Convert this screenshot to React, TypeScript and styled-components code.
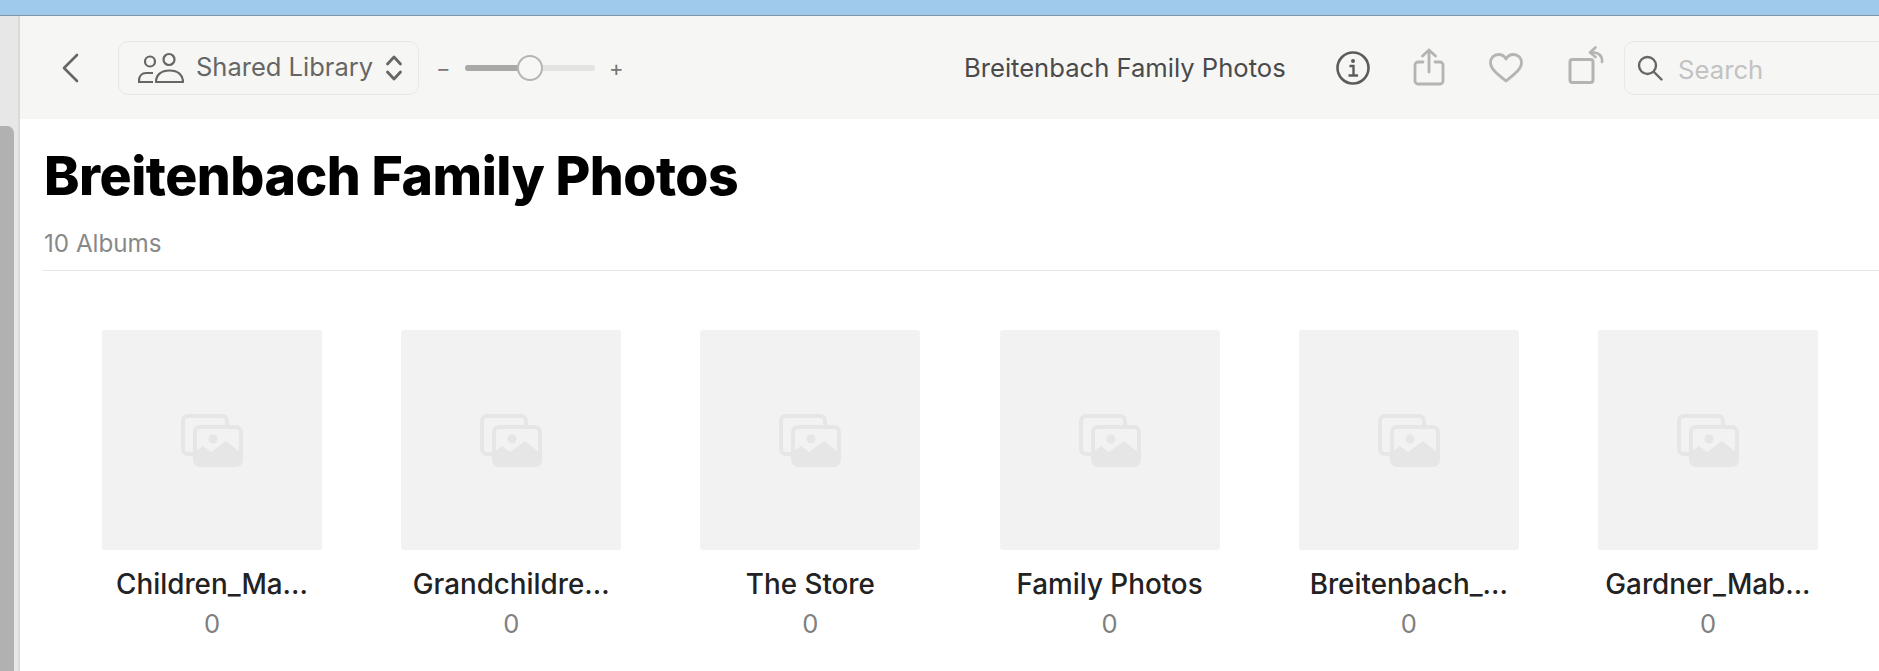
import React, { FC } from 'react';
import styled, { createGlobalStyle } from 'styled-components';

const albums = [
  'Children_Ma...',
  'Grandchildre...',
  'The Store',
  'Family Photos',
  'Breitenbach_...',
  'Gardner_Mab...',
];

const GlobalStyle = createGlobalStyle`
  html, body {
    margin: 0;
    padding: 0;
    background: #fff;
    overflow: hidden;
  }
  body {
    font-family: Inter, "Liberation Sans", sans-serif;
  }
`;

const PlaceholderIcon: FC = () => (
  <svg width="64" height="54" viewBox="0 0 64 54" fill="none">
    <path
      d="M13 41H8a5 5 0 0 1-5-5V8a5 5 0 0 1 5-5h34a5 5 0 0 1 5 5v6"
      stroke="#e6e6e6"
      strokeWidth="4"
    />
    <rect x="15" y="14" width="46" height="38" rx="5" fill="#f2f2f2" stroke="#e6e6e6" strokeWidth="4" />
    <circle cx="33" cy="26" r="4.5" fill="#e6e6e6" />
    <path
      d="M15 47V39l8-6 8 6 15-11 15 12v7a5 5 0 0 1-5 5H20a5 5 0 0 1-5-5z"
      fill="#e6e6e6"
    />
  </svg>
);

export default function App() {
  return (
    <Page>
      <GlobalStyle />
      <TopStrip />
      <Body>
        <SideStrip>
          <ScrollThumb />
        </SideStrip>
        <Main>
          <Toolbar>
            <BackButton aria-label="Back">
              <svg width="18" height="30" viewBox="0 0 18 30" fill="none">
                <path d="M16 2 3 15l13 13" stroke="#666" strokeWidth="2.6" strokeLinecap="round" strokeLinejoin="round" />
              </svg>
            </BackButton>
            <LibraryPicker>
              <svg width="46" height="32" viewBox="0 0 46 32" fill="none" stroke="#666" strokeWidth="2.2">
                <circle cx="12" cy="9.5" r="5" />
                <circle cx="31" cy="7.5" r="5.5" />
                <path d="M15 21H8c-4 0-7 3-7 8v1h14" />
                <path d="M18 30c0-7 5-11.500 13.500-11.500S45 23 45 30z" strokeLinejoin="round" />
              </svg>
              <PickerLabel>Shared Library</PickerLabel>
              <svg width="18" height="28" viewBox="0 0 18 28" fill="none" stroke="#666" strokeWidth="2.800" strokeLinecap="round" strokeLinejoin="round">
                <path d="M2.500 10 9 3l6.500 7" />
                <path d="M2.500 18 9 25l6.500-7" />
              </svg>
            </LibraryPicker>
            <ZoomSign $first>−</ZoomSign>
            <ZoomTrack>
              <ZoomFill />
              <ZoomThumb />
            </ZoomTrack>
            <ZoomSign>+</ZoomSign>
            <ToolbarTitle>Breitenbach Family Photos</ToolbarTitle>
            <ActionIcon aria-label="Info">
              <svg width="36" height="36" viewBox="0 0 36 36" fill="none" stroke="#5c5c5c">
                <circle cx="18" cy="18" r="15.500" strokeWidth="2.600" />
                <circle cx="18" cy="11" r="2" fill="#5c5c5c" stroke="none" />
                <path d="M14.500 16H18.500V25M13.500 25.500H23" strokeWidth="2.400" />
              </svg>
            </ActionIcon>
            <ActionIcon aria-label="Share" $gap={42}>
              <svg width="32" height="40" viewBox="0 0 32 40" fill="none" stroke="#b4b4b4" strokeWidth="2.800" strokeLinecap="round" strokeLinejoin="round">
                <path d="M10 14H5a3 3 0 0 0-3 3v16a3 3 0 0 0 3 3h22a3 3 0 0 0 3-3V17a3 3 0 0 0-3-3h-5" />
                <path d="M16 24V2M9.500 8 16 2l6.500 6" />
              </svg>
            </ActionIcon>
            <ActionIcon aria-label="Favorite" $gap={44}>
              <svg width="34" height="30" viewBox="0 0 34 30" fill="none" stroke="#b4b4b4" strokeWidth="2.800" strokeLinejoin="round">
                <path d="M17 28C7 20 1.500 15.500 1.500 9.500 1.500 5 5 1.500 9.500 1.500c3.200 0 6 1.700 7.500 4.500 1.500-2.800 4.300-4.500 7.500-4.500 4.500 0 8 3.500 8 8 0 6-5.500 10.500-15.500 18.500z" />
              </svg>
            </ActionIcon>
            <ActionIcon aria-label="Rotate" $gap={45}>
              <svg width="36" height="44" viewBox="0 0 36 44" fill="none" stroke="#b4b4b4" strokeLinecap="round" strokeLinejoin="round">
                <rect x="2" y="13.500" width="23" height="23" rx="2.500" strokeWidth="3" />
                <path d="M34 16c.5-6-3-9.500-9-9.500" strokeWidth="2.600" />
                <path d="M27.500 1.500 22 6.500l5.500 4.500" strokeWidth="2.600" />
              </svg>
            </ActionIcon>
            <SearchBox>
              <svg width="26" height="26" viewBox="0 0 26 26" fill="none" stroke="#666" strokeWidth="2.400" strokeLinecap="round">
                <circle cx="10.500" cy="10.500" r="8.500" />
                <path d="m17 17 7.500 7.500" />
              </svg>
              <SearchText>Search</SearchText>
            </SearchBox>
          </Toolbar>
          <Content>
            <Heading>Breitenbach Family Photos</Heading>
            <SubHeading>10 Albums</SubHeading>
            <Divider />
            <AlbumGrid>
              {albums.map((name) => (
                <AlbumCard key={name}>
                  <AlbumThumb>
                    <PlaceholderIcon />
                  </AlbumThumb>
                  <AlbumName>{name}</AlbumName>
                  <AlbumCount>0</AlbumCount>
                </AlbumCard>
              ))}
            </AlbumGrid>
          </Content>
        </Main>
      </Body>
    </Page>
  );
}

const Page = styled.div`
  width: 1879px;
  height: 671px;
  display: flex;
  flex-direction: column;
  overflow: hidden;
`;

const TopStrip = styled.div`
  height: 15px;
  flex-shrink: 0;
  background: #9fcaec;
  border-bottom: 1px solid #7f98ac;
`;

const Body = styled.div`
  flex: 1;
  display: flex;
  min-height: 0;
`;

const SideStrip = styled.div`
  width: 18px;
  flex-shrink: 0;
  background: #e6e7e6;
  border-right: 2px solid #d9dad9;
`;

const ScrollThumb = styled.div`
  width: 14px;
  height: 560px;
  margin-top: 110px;
  background: #b0b1b0;
  border-radius: 0 7px 0 0;
`;

const Main = styled.div`
  flex: 1;
  min-width: 0;
  display: flex;
  flex-direction: column;
`;

const Toolbar = styled.div`
  height: 103px;
  flex-shrink: 0;
  display: flex;
  align-items: center;
  padding-left: 41px;
  background: #f6f6f4;
  color: #555;
`;

const BackButton = styled.div`
  display: flex;
  width: 18px;
  flex-shrink: 0;
`;

const LibraryPicker = styled.div`
  width: 301px;
  height: 54px;
  flex-shrink: 0;
  box-sizing: border-box;
  margin-left: 39px;
  padding-left: 19px;
  display: flex;
  align-items: center;
  gap: 12px;
  border: 1.5px solid #e8e8e6;
  border-radius: 10px;
`;

const PickerLabel = styled.span`
  width: 177px;
  margin-top: -2px;
  font-size: 25.500px;
  line-height: 30px;
  white-space: nowrap;
  color: #666;
`;

const ZoomSign = styled.span<{ $first?: boolean }>`
  width: 14px;
  flex-shrink: 0;
  margin-left: ${({ $first }) => ($first ? '17px' : '14px')};
  font-size: 22px;
  text-align: center;
  color: #777;
`;

const ZoomTrack = styled.div`
  position: relative;
  width: 130px;
  height: 6px;
  flex-shrink: 0;
  margin-left: 15px;
  border-radius: 3px;
  background: #e3e3e1;
`;

const ZoomFill = styled.div`
  width: 56px;
  height: 100%;
  border-radius: 3px;
  background: #a9a9a8;
`;

const ZoomThumb = styled.div`
  position: absolute;
  left: 52px;
  top: -10px;
  width: 26px;
  height: 26px;
  box-sizing: border-box;
  border: 2px solid #b5b5b3;
  border-radius: 50%;
  background: #f7f7f5;
`;

const ToolbarTitle = styled.div`
  width: 320px;
  flex-shrink: 0;
  margin-left: 341px;
  font-size: 25.600px;
  white-space: nowrap;
  color: #4a4a4a;
`;

const ActionIcon = styled.div<{ $gap?: number }>`
  display: flex;
  flex-shrink: 0;
  margin-left: ${({ $gap }) => $gap ?? 51}px;
`;

const SearchBox = styled.div`
  width: 320px;
  height: 54px;
  flex-shrink: 0;
  box-sizing: border-box;
  margin-left: 20px;
  padding-left: 12px;
  display: flex;
  align-items: center;
  gap: 15px;
  border: 1.5px solid #e8e8e6;
  border-radius: 10px;
`;

const SearchText = styled.span`
  margin-top: 3px;
  font-size: 25.700px;
  color: #c2c2c2;
`;

const Content = styled.div`
  flex: 1;
  display: flex;
  flex-direction: column;
  padding-left: 22px;
  background: #fff;
`;

const Heading = styled.h1`
  margin: 25px 0 0 2px;
  font-size: 53.500px;
  line-height: 64px;
  font-weight: 800;
  letter-spacing: -0.5px;
  white-space: nowrap;
  color: #000;
`;

const SubHeading = styled.div`
  margin: 22px 0 0 2px;
  font-size: 24.200px;
  line-height: 28px;
  color: #888;
`;

const Divider = styled.div`
  height: 1px;
  margin-top: 12px;
  background: #e8e8e8;
`;

const AlbumGrid = styled.div`
  display: flex;
  gap: 79.200px;
  padding: 59px 0 0 60px;
`;

const AlbumCard = styled.div`
  width: 220px;
  flex-shrink: 0;
  display: flex;
  flex-direction: column;
  align-items: center;
`;

const AlbumThumb = styled.div`
  width: 220px;
  height: 220px;
  display: flex;
  align-items: center;
  justify-content: center;
  border-radius: 3px;
  background: #f2f2f2;
`;

const AlbumName = styled.div`
  margin-top: 17px;
  font-size: 27.800px;
  line-height: 34px;
  font-weight: 500;
  white-space: nowrap;
  color: #222;
`;

const AlbumCount = styled.div`
  margin-top: 8px;
  font-size: 25.500px;
  line-height: 30px;
  color: #808080;
`;
